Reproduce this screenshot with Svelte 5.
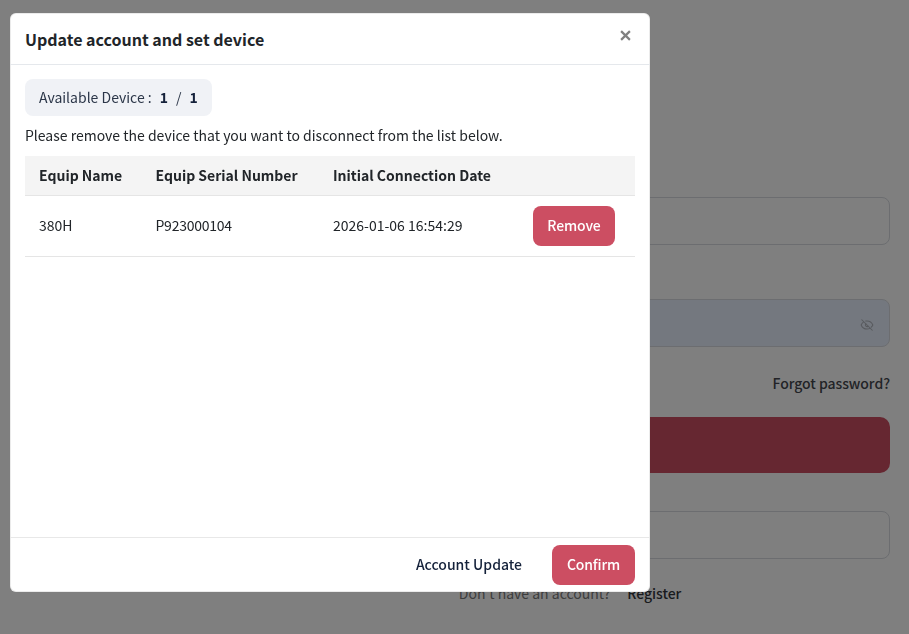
<script>
  const devices = [{ name: "380H", serial: "P923000104", date: "2026-01-06 16:54:29" }];
</script>

<div class="page">
  <form class="login">
    <div class="field first"></div>
    <div class="field filled">
      <svg class="eye" viewBox="0 0 24 24" width="14" height="14" fill="none" stroke="currentColor" stroke-width="1.800" stroke-linecap="round" stroke-linejoin="round">
        <path d="M9.900 5.200A9.700 9.700 0 0 1 12 5c5.500 0 9 4.500 10 7a13 13 0 0 1-2.600 3.700" />
        <path d="M6.200 6.700C4 8.100 2.700 10.200 2 12c1 2.500 4.500 7 10 7 2 0 3.700-.6 5.200-1.600" />
        <path d="M9.900 9.900a3 3 0 0 0 4.200 4.200" />
        <path d="M3 3l18 18" />
      </svg>
    </div>
    <div class="forgot">Forgot password?</div>
    <div class="submit"></div>
    <div class="field"></div>
    <div class="signup"><span class="muted">Don't have an account?</span><span class="reg">Register</span></div>
  </form>
</div>

<div class="overlay">
  <div class="modal" role="dialog">
    <header>
      <h2>Update account and set device</h2>
      <button class="close" aria-label="Close">
        <svg viewBox="0 0 12 12" width="11" height="11" fill="none" stroke="currentColor" stroke-width="2.400">
          <path d="M1.200 1.200l9.600 9.600M10.800 1.200l-9.600 9.600" />
        </svg>
      </button>
    </header>

    <div class="body">
      <div class="count">Available Device : <b>1</b><i>/</i><b>1</b></div>
      <p>Please remove the device that you want to disconnect from the list below.</p>
      <table>
        <thead>
          <tr>
            <th class="c1">Equip Name</th>
            <th class="c2">Equip Serial Number</th>
            <th class="c3">Initial Connection Date</th>
            <th></th>
          </tr>
        </thead>
        <tbody>
          {#each devices as d}
            <tr>
              <td>{d.name}</td>
              <td class="serial">{d.serial}</td>
              <td>{d.date}</td>
              <td class="action"><button class="danger">Remove</button></td>
            </tr>
          {/each}
        </tbody>
      </table>
    </div>

    <footer>
      <button class="link">Account Update</button>
      <button class="danger">Confirm</button>
    </footer>
  </div>
</div>

<style>
  :global(body) {
    margin: 0;
    background: #fff;
    font-family: "Noto Sans CJK KR", "Noto Sans", sans-serif;
    color: #212529;
  }
  button {
    font-family: inherit;
    border: 0;
    cursor: pointer;
  }
  .page {
    height: 634px;
    box-sizing: border-box;
    padding: 197px 19px 0 250px;
    overflow: hidden;
  }
  .login {
    display: flex;
    flex-direction: column;
  }
  .field {
    height: 48px;
    box-sizing: border-box;
    border: 1px solid #d8dbe0;
    border-radius: 8px;
    display: flex;
    align-items: center;
    justify-content: flex-end;
    padding-right: 15px;
  }
  .field.first {
    margin-bottom: 54px;
  }
  .field.filled {
    background: #e8f0fe;
    color: #b0b4bc;
  }
  .eye {
    margin-top: 3px;
  }
  .forgot {
    margin-top: 25px;
    height: 22px;
    line-height: 22px;
    text-align: right;
    font-size: 14px;
    font-weight: 500;
    letter-spacing: -0.05px;
    color: #44474e;
  }
  .submit {
    margin: 23px 0 38px;
    height: 56px;
    background: #cc4e62;
    border-radius: 10px;
  }
  .signup {
    margin-top: 23px;
    display: flex;
    justify-content: center;
    gap: 17px;
    font-size: 14px;
    line-height: 22px;
  }
  .muted {
    color: #7a7a7a;
  }
  .reg {
    font-weight: 500;
    letter-spacing: -0.05px;
    color: #33373d;
  }
  .overlay {
    position: fixed;
    inset: 0;
    background: rgba(0, 0, 0, 0.5);
    padding: 13px 0 0 10px;
  }
  .modal {
    width: 640px;
    height: 579px;
    background: #fff;
    border-radius: 6px;
    display: flex;
    flex-direction: column;
    box-shadow: inset 0 0 0 1px rgba(0, 0, 0, 0.08);
  }
  header {
    height: 52px;
    flex: none;
    box-sizing: border-box;
    border-bottom: 1px solid #e5e8ec;
    padding: 0 15px;
    display: flex;
    align-items: center;
    justify-content: space-between;
  }
  h2 {
    margin: 0;
    font-size: 16px;
    font-weight: 700;
    color: #212529;
  }
  .close {
    background: none;
    padding: 0;
    color: #808080;
    display: flex;
    margin: -6px 4px 0 0;
  }
  .body {
    flex: 1;
    padding: 14px 15px 0;
  }
  .count {
    display: inline-block;
    height: 37px;
    line-height: 37px;
    padding: 0 14px;
    background: #f0f2f6;
    border-radius: 8px;
    font-size: 14px;
    color: #2b3648;
  }
  .count b {
    margin-left: 5px;
    color: #14213a;
  }
  .count i {
    font-style: normal;
    margin-left: 8px;
    margin-right: 3px;
  }
  p {
    margin: 8px 0 0;
    height: 22px;
    line-height: 22px;
    font-size: 14px;
    color: #212529;
  }
  table {
    width: 610px;
    margin-top: 10px;
    border-collapse: collapse;
    table-layout: fixed;
    font-size: 14px;
  }
  th {
    height: 39px;
    box-sizing: border-box;
    padding: 0 14px;
    background: #f4f4f4;
    border-bottom: 1px solid #e5e5e5;
    text-align: left;
    font-weight: 700;
    color: #212529;
  }
  .c1 {
    width: 116.5px;
  }
  .c2 {
    width: 177.5px;
  }
  .c3 {
    width: 200px;
  }
  td {
    height: 61px;
    box-sizing: border-box;
    padding: 0 14px 2px;
    border-bottom: 1px solid #e5e5e5;
    color: #212529;
  }
  td.action {
    padding-bottom: 0;
  }
  .serial {
    letter-spacing: -0.25px;
  }
  .danger {
    display: block;
    width: 82px;
    height: 40px;
    background: #cc4e62;
    color: #fff;
    border-radius: 8px;
    font-size: 14px;
    font-weight: 500;
    letter-spacing: -0.15px;
    padding: 0 0 2px;
  }
  footer {
    height: 55px;
    flex: none;
    box-sizing: border-box;
    border-top: 1px solid #e8e8e8;
    padding: 7px 15px 0;
    display: flex;
    align-items: flex-start;
    justify-content: flex-end;
    gap: 30px;
  }
  footer .danger {
    width: 83px;
  }
  .link {
    background: none;
    padding: 0 0 2px;
    height: 40px;
    font-size: 14px;
    font-weight: 500;
    color: #14213a;
  }
</style>
